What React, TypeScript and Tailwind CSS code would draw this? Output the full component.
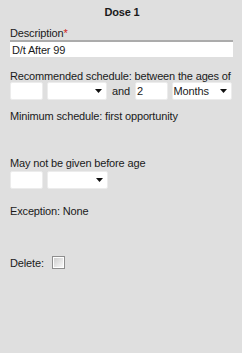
import React from 'react'

const Caret = () => (
  <svg width="7" height="4" viewBox="0 0 7 4" className="shrink-0">
    <path d="M0 0h7L3.5 4z" fill="#111" />
  </svg>
)

const Box = ({ value = '', w }: { value?: string; w: string }) => (
  <div className={`${w} h-[18px] bg-white rounded-[2px] border border-[#ececec] flex items-center pl-[1px]`}>
    {value}
  </div>
)

const Select = ({ value = '', w }: { value?: string; w: string }) => (
  <div className={`${w} h-[18px] bg-white rounded-[2px] border border-[#ececec] flex items-center justify-between pl-[1px] pr-[4px]`}>
    <span>{value}</span>
    <Caret />
  </div>
)

const App = () => {
  return (
    <div
      className="w-[242px] h-[353px] bg-[#dfdfdf] text-[#1a1a1a] text-[11px] leading-[12px] tracking-[-0.15px] px-[10px] whitespace-nowrap"
      style={{ fontFamily: '"Liberation Sans", Arial, sans-serif' }}
    >
      <h2 className="text-center font-bold text-[11px] leading-[12px] pt-[6px] pl-[2px]">Dose 1</h2>

      <div className="mt-[9px]">
        Description<span className="text-[#d02020]">*</span>
      </div>
      <div className="mt-[1px] h-[17px] w-[223px] bg-white border-t-2 border-[#ababab] flex items-center px-[2px]">
        D/t After 99
      </div>

      <div className="mt-[13px]">Recommended schedule: between the ages of</div>
      <div className="flex items-center gap-[4px]">
        <Box w="w-[33px]" />
        <Select w="w-[61px]" />
        <span className="px-[1px]">and</span>
        <Box w="w-[33px]" value="2" />
        <Select w="w-[61px]" value="Months" />
      </div>

      <div className="mt-[10px]">Minimum schedule: first opportunity</div>

      <div className="mt-[35px]">May not be given before age</div>
      <div className="mt-[2px] flex items-center gap-[4px]">
        <Box w="w-[33px]" />
        <Select w="w-[61px]" />
      </div>

      <div className="mt-[16px]">Exception: None</div>

      <div className="mt-[39px] flex items-center gap-[8px]">
        <span>Delete:</span>
        <div className="w-[13px] h-[13px] border border-[#8e8e8e] bg-white p-[1px]">
          <div className="w-full h-full bg-gradient-to-br from-[#cfcfcf] to-[#f8f8f8]" />
        </div>
      </div>
    </div>
  )
}

export default App
